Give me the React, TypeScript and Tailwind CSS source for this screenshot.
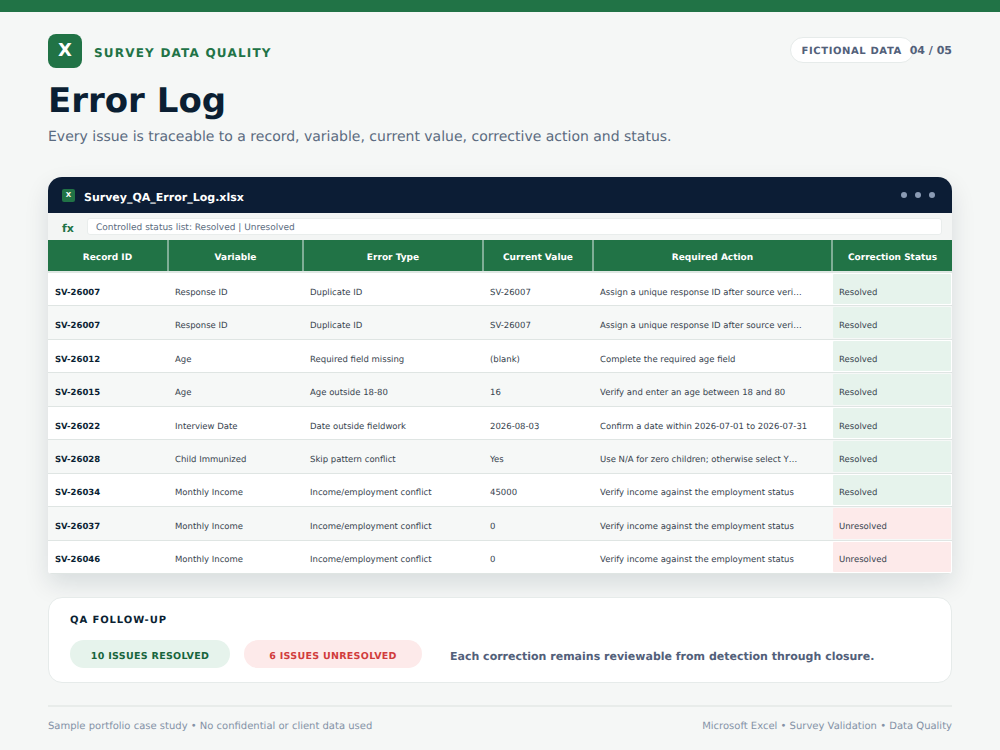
const rows = [
  ["SV-26007", "Response ID", "Duplicate ID", "SV-26007", "Assign a unique response ID after source veri…", "Resolved"],
  ["SV-26007", "Response ID", "Duplicate ID", "SV-26007", "Assign a unique response ID after source veri…", "Resolved"],
  ["SV-26012", "Age", "Required field missing", "(blank)", "Complete the required age field", "Resolved"],
  ["SV-26015", "Age", "Age outside 18-80", "16", "Verify and enter an age between 18 and 80", "Resolved"],
  ["SV-26022", "Interview Date", "Date outside fieldwork", "2026-08-03", "Confirm a date within 2026-07-01 to 2026-07-31", "Resolved"],
  ["SV-26028", "Child Immunized", "Skip pattern conflict", "Yes", "Use N/A for zero children; otherwise select Y…", "Resolved"],
  ["SV-26034", "Monthly Income", "Income/employment conflict", "45000", "Verify income against the employment status", "Resolved"],
  ["SV-26037", "Monthly Income", "Income/employment conflict", "0", "Verify income against the employment status", "Unresolved"],
  ["SV-26046", "Monthly Income", "Income/employment conflict", "0", "Verify income against the employment status", "Unresolved"],
];
const headers = ["Record ID", "Variable", "Error Type", "Current Value", "Required Action", "Correction Status"];
const cols = "grid grid-cols-[120px_135px_180px_110px_239px_120px]";

export default function App() {
  return (
    <div className="w-[1000px] h-[750px] overflow-hidden bg-[#f5f7f6] font-['DejaVu_Sans',sans-serif] [text-rendering:geometricPrecision] flex flex-col">
      <div className="h-3 bg-[#217346] shrink-0" />
      <div className="flex-1 flex flex-col px-12">
        <div className="flex justify-between items-start pt-[22px] h-[56px]">
          <div className="flex items-center gap-3">
            <div className="w-[34px] h-[34px] rounded-lg bg-[#217346] text-white font-bold text-[18px] leading-none flex items-center justify-center">X</div>
            <div className="text-[#217346] text-[12px] font-bold tracking-[1.2px] pt-[3px]">SURVEY DATA QUALITY</div>
          </div>
          <div className="flex items-start mt-[3px]">
            <div className="w-[124px] h-[26px] rounded-full bg-white border-[1.5px] border-[#e6ebea] text-[#52607a] text-[10px] font-bold tracking-[0.6px] pt-[2px] flex items-center justify-center -mr-[4px] shrink-0">FICTIONAL DATA</div>
            <div className="text-[#52607a] text-[11px] leading-[26px] font-bold whitespace-nowrap pt-[1px]">04 / 05</div>
          </div>
        </div>
        <h1 className="text-[34px] leading-[44px] font-bold text-[#0b1f33] mt-[11px]">Error Log</h1>
        <p className="text-[14px] leading-[18px] text-[#5b6b80] mt-[5px]">Every issue is traceable to a record, variable, current value, corrective action and status.</p>

        <div className="mt-[31px] w-[904px] rounded-t-[14px] rounded-b-[4px] bg-white shadow-[0_10px_24px_rgba(11,31,51,0.12)] overflow-hidden">
          <div className="h-9 bg-[#0c1d35] flex items-center justify-between pl-[14px] pr-[17px]">
            <div className="flex items-center gap-[9px]">
              <div className="w-[13px] h-[13px] rounded-[2px] bg-[#217346] text-white text-[7px] font-bold flex items-center justify-center">X</div>
              <div className="text-white text-[11px] font-bold pt-[6px]">Survey_QA_Error_Log.xlsx</div>
            </div>
            <div className="flex gap-2 -mt-[1px]">
              <span className="w-[6px] h-[6px] rounded-full bg-[#8b9bb4]" />
              <span className="w-[6px] h-[6px] rounded-full bg-[#8b9bb4]" />
              <span className="w-[6px] h-[6px] rounded-full bg-[#8b9bb4]" />
            </div>
          </div>
          <div className="h-[27px] bg-[#f3f5f4] flex items-center pl-[14px] pr-[10px]">
            <div className="w-[25px] text-[#217346] text-[11px] font-bold pt-[5px]">fx</div>
            <div className="flex-1 h-[17px] bg-white border-[1.5px] border-[#e9edec] rounded-[3px] pl-[8px] text-[9px] leading-[18px] text-[#5b6b80]">Controlled status list: Resolved | Unresolved</div>
          </div>
          <div className="grid grid-cols-[119px_135px_180px_110px_239px_121px] h-[33px] bg-[#217346] border-b-2 border-[#dfe7e3]">
            {headers.map((h, i) => (
              <div key={h} className={`flex items-center justify-center text-white text-[9px] font-bold pt-[7px] ${i > 0 ? "border-l-2 border-[#7fae96]" : ""}`}>{h}</div>
            ))}
          </div>
          {rows.map((r, i) => (
            <div key={i} className={`${cols} h-[33.44px] border-b border-[#dfe5e3] ${i % 2 ? "bg-[#f6f8f7]" : "bg-white"}`}>
              {r.map((c, j) =>
                j === 5 ? (
                  <div key={j} className={`flex items-center ml-[1px] mr-[1px] my-[1px] pl-[6px] pt-[8px] rounded-[1px] text-[8.5px] text-[#38444f] ${c === "Resolved" ? "bg-[#e6f3ec]" : "bg-[#fdeaea]"}`}>{c}</div>
                ) : (
                  <div key={j} className={`flex items-center whitespace-nowrap pl-[7px] pt-[8px] text-[8.5px] ${j === 0 ? "font-bold text-[#0b1f33]" : "text-[#38444f]"}`}>{c}</div>
                )
              )}
            </div>
          ))}
        </div>

        <div className="mt-[23px] h-[86px] rounded-[14px] bg-white border-[1.5px] border-[#e6ebea] px-[21px] pt-[16px]">
          <div className="text-[10px] leading-[14px] font-bold tracking-[0.9px] text-[#0b1f33]">QA FOLLOW-UP</div>
          <div className="flex items-center mt-[12px]">
            <div className="w-[160px] h-[28px] rounded-full bg-[#e6f3ec] text-[#17653c] text-[9.5px] font-bold tracking-[0.3px] pt-[6px] flex items-center justify-center">10 ISSUES RESOLVED</div>
            <div className="ml-[14px] w-[178px] h-[28px] rounded-full bg-[#fdeaea] text-[#d13c3c] text-[9.5px] font-bold tracking-[0.3px] pt-[6px] flex items-center justify-center">6 ISSUES UNRESOLVED</div>
            <div className="ml-[28px] mt-[7px] text-[11px] font-bold text-[#52607a]">Each correction remains reviewable from detection through closure.</div>
          </div>
        </div>

        <div className="mt-[22px] border-t-2 border-[#e8ecea] pt-[13px] flex justify-between text-[10px] leading-[14px] text-[#8492a6]">
          <div>Sample portfolio case study • No confidential or client data used</div>
          <div>Microsoft Excel • Survey Validation • Data Quality</div>
        </div>
      </div>
    </div>
  );
}
